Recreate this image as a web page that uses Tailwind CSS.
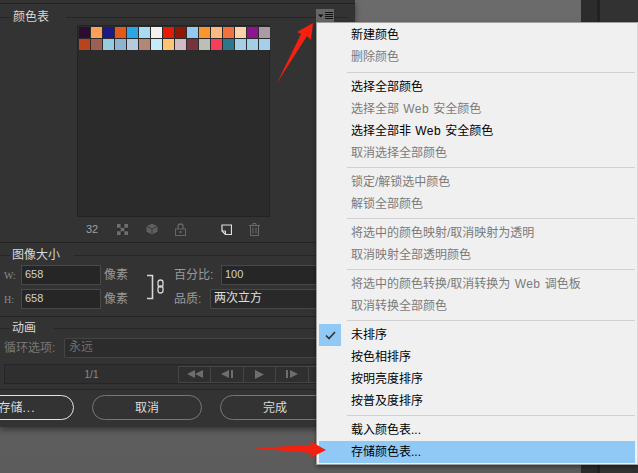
<!DOCTYPE html>
<html>
<head>
<meta charset="utf-8">
<title>颜色表</title>
<script src="https://cdn.jsdelivr.net/npm/@tailwindcss/browser@4"></script>
</head>
<body class="bg-[#636363] font-['Liberation_Sans','Noto_Sans_CJK_SC',sans-serif]">
<div class="relative w-[638px] h-[473px] overflow-hidden bg-gradient-to-b from-[#6b6b6b] to-[#5c5c5c]">

  <!-- panel behind the menu -->
  <div class="w-[355px] h-[427px] bg-[#333333] flex flex-col text-[12px] text-[#cfcfcf] whitespace-nowrap shadow-[0_3px_6px_rgba(0,0,0,0.4)]">
    <div class="h-[4px] border-b border-[#222222]"></div>

    <!-- colour table -->
    <div class="h-[17px] mt-[5px] flex items-center">
      <div class="w-[10px] h-px bg-[#262626]"></div>
      <span class="px-[3px] leading-[17px] text-[#d8d8d8]">颜色表</span>
      <div class="flex-1 ml-[14px] mr-[7px] h-px bg-[#262626]"></div>
    </div>
    <div class="ml-[77px] w-[193px] h-[192px] mt-[-1px] bg-[#2b2b2b] border border-[#232323] pt-[1px] pl-[1px]">
      <div class="grid grid-cols-[repeat(16,11px)] auto-rows-[11px] gap-px">
        <div class="bg-[#2e0c2f]"></div><div class="bg-[#fc9f5c]"></div><div class="bg-[#1c1987]"></div><div class="bg-[#e2591d]"></div><div class="bg-[#2ba6e4]"></div><div class="bg-[#a9dcf1]"></div><div class="bg-[#f5f1ec]"></div><div class="bg-[#e31c02]"></div><div class="bg-[#8e1803]"></div><div class="bg-[#95c9f0]"></div><div class="bg-[#fa9530]"></div><div class="bg-[#fdb981]"></div><div class="bg-[#f17240]"></div><div class="bg-[#fdd4a9]"></div><div class="bg-[#8f1490]"></div><div class="bg-[#a99ca5]"></div>
        <div class="bg-[#b8431d]"></div><div class="bg-[#9b5f55]"></div><div class="bg-[#98cbdf]"></div><div class="bg-[#8fb4d3]"></div><div class="bg-[#b3cbdc]"></div><div class="bg-[#b38778]"></div><div class="bg-[#c4ecfb]"></div><div class="bg-[#fec374]"></div><div class="bg-[#d3b9c3]"></div><div class="bg-[#76323d]"></div><div class="bg-[#bcbfb5]"></div><div class="bg-[#f83e5d]"></div><div class="bg-[#2e768d]"></div><div class="bg-[#a5cfe7]"></div><div class="bg-[#a3cfe6]"></div><div class="bg-[#a3d0e8]"></div>
      </div>
    </div>

    <!-- colour table toolbar -->
    <div class="ml-[86px] h-[24px] flex items-center text-[#a0a0a0]">
      <span class="w-[31px] text-[11px]">32</span>
      <svg class="w-[11px] h-[11px]" viewBox="0 0 12 12"><rect width="12" height="12" fill="#2e2e2e"/><path d="M0 0h4v4H0zM8 0h4v4H8zM4 4h4v4H4zM0 8h4v4H0zM8 8h4v4H8z" fill="#6e6e6e"/></svg>
      <svg class="ml-[18px] w-[12px] h-[12px]" viewBox="0 0 12 12"><path d="M6 .5l5.500 2.700v5.600L6 11.500.5 8.800V3.200z" fill="#5f5f5f"/><path d="M.5 3.200L6 5.900l5.500-2.700M6 5.900v5.600" stroke="#3a3a3a" fill="none"/></svg>
      <svg class="ml-[17px] w-[11px] h-[13px]" viewBox="0 0 11 13"><path d="M3 6V3.500a2.500 2.500 0 0 1 5 0V6" stroke="#666" stroke-width="1.300" fill="none"/><rect x=".5" y="6" width="10" height="6.500" fill="none" stroke="#666"/><rect x="4.500" y="8" width="2" height="2" fill="#666"/></svg>
      <svg class="ml-[35px] w-[11px] h-[11px]" viewBox="0 0 11 11"><path d="M1 1h9.500v9.500H4.500L1 7z" fill="none" stroke="#e0e0e0" stroke-width="1.200"/><path d="M1 7h3.500v3.500" fill="none" stroke="#e0e0e0"/></svg>
      <svg class="ml-[17px] w-[11px] h-[13px]" viewBox="0 0 11 13"><path d="M0 2.500h11M4 2.500V.5h3v2M1.500 2.500v10h8v-10M4 4.500v6M7 4.500v6" fill="none" stroke="#6a6a6a"/></svg>
    </div>
    <div class="h-px bg-[#242424] mt-[1px]"></div>

    <!-- image size -->
    <div class="h-[17px] mt-[4px] flex items-center">
      <div class="w-[10px] h-px bg-[#262626]"></div>
      <span class="px-[2px] leading-[17px] text-[#d8d8d8]">图像大小</span>
      <div class="flex-1 ml-[12px] h-px bg-[#262626]"></div>
    </div>
    <div class="flex mt-[-1px]">
      <div class="w-[128px]">
        <div class="flex items-center h-[24px]">
          <span class="w-[21px] pl-[4px] text-[10px] text-[#8a8a8a] font-['Liberation_Serif']">W:</span>
          <div class="w-[80px] h-[20px] bg-[#262626] border border-[#484848] pl-[3px] leading-[17px] text-[11px] text-[#d0d0d0]">658</div>
          <span class="ml-[3px] text-[#9a9a9a]">像素</span>
        </div>
        <div class="flex items-center h-[24px]">
          <span class="w-[21px] pl-[4px] text-[10px] text-[#8a8a8a] font-['Liberation_Serif']">H:</span>
          <div class="w-[80px] h-[20px] bg-[#262626] border border-[#484848] pl-[3px] leading-[17px] text-[11px] text-[#d0d0d0]">658</div>
          <span class="ml-[3px] text-[#9a9a9a]">像素</span>
        </div>
      </div>
      <svg class="ml-[18px] mt-[11px] w-[20px] h-[26px]" viewBox="0 0 20 26"><path d="M1 1.500h5.500v23H1" fill="none" stroke="#d6d6d6" stroke-width="1.600"/><rect x="12" y="6" width="5" height="7" rx="2.500" fill="none" stroke="#d6d6d6" stroke-width="1.300"/><rect x="12" y="12" width="5" height="7" rx="2.500" fill="none" stroke="#d6d6d6" stroke-width="1.300"/></svg>
      <div class="ml-[8px] flex-1">
        <div class="flex items-center h-[24px]">
          <span class="w-[47px] text-[#9a9a9a]">百分比:</span>
          <div class="flex-1 h-[20px] bg-[#262626] border border-[#484848] border-r-0 pl-[3px] leading-[17px] text-[11px] text-[#d0d0d0]">100</div>
        </div>
        <div class="flex items-center h-[24px]">
          <span class="w-[36px] text-[#9a9a9a]">品质:</span>
          <div class="flex-1 h-[20px] bg-[#292929] border border-[#484848] border-r-0 rounded-l-[2px] pl-[3px] leading-[17px] text-[#e0e0e0]">两次立方</div>
        </div>
      </div>
    </div>
    <div class="h-px bg-[#242424] mt-[5px]"></div>

    <!-- animation -->
    <div class="h-[17px] mt-[3px] flex items-center">
      <div class="w-[10px] h-px bg-[#262626]"></div>
      <span class="px-[2px] leading-[17px] text-[#d8d8d8]">动画</span>
      <div class="flex-1 ml-[16px] h-px bg-[#262626]"></div>
    </div>
    <div class="flex items-center h-[20px] mt-[1px]">
      <span class="w-[64px] pl-[4px] text-[#777777]">循环选项:</span>
      <div class="flex-1 h-[20px] bg-[#2c2c2c] border border-[#444444] border-r-0 rounded-l-[2px] pl-[4px] leading-[17px] text-[#6e6e6e]">永远</div>
    </div>
    <div class="ml-[4px] mt-[6px] h-[20px] bg-[#2f2f2f] border border-[#262626] border-r-0 flex items-center">
      <span class="w-[173px] text-center text-[10px] text-[#8a8a8a]">1/1</span>
      <div class="flex h-[17px]">
        <div class="w-[33px] border border-[#454545] flex items-center justify-center"><svg class="w-[16px] h-[8px]" viewBox="0 0 16 8"><path d="M8 0v8L0 4zM16 0v8L8 4z" fill="#6e6e6e"/></svg></div>
        <div class="w-[33px] border border-[#454545] border-l-0 flex items-center justify-center"><svg class="w-[12px] h-[8px]" viewBox="0 0 12 8"><path d="M8 0v8L0 4zM10 0h2v8h-2z" fill="#6e6e6e"/></svg></div>
        <div class="w-[32px] border border-[#454545] border-l-0 flex items-center justify-center"><svg class="w-[9px] h-[9px]" viewBox="0 0 9 9"><path d="M0 0v9l9-4.500z" fill="#6e6e6e"/></svg></div>
        <div class="w-[33px] border border-[#454545] border-l-0 flex items-center justify-center"><svg class="w-[12px] h-[8px]" viewBox="0 0 12 8"><path d="M4 0v8l8-4zM0 0h2v8H0z" fill="#6e6e6e"/></svg></div>
        <div class="w-[8px] border-y border-[#454545]"></div>
      </div>
    </div>
    <div class="h-px bg-[#262626] mt-[5px]"></div>

    <!-- buttons -->
    <div class="flex mt-[5px] ml-[-36px] gap-[18px] text-[12px] text-[#dcdcdc]">
      <div class="shrink-0 w-[110px] h-[25px] border border-[#e4e4e4] rounded-full flex items-center justify-center pr-[4px]">存储<span class="tracking-[1px]">...</span></div>
      <div class="shrink-0 w-[110px] h-[25px] border border-[#777777] rounded-full flex items-center justify-center">取消</div>
      <div class="shrink-0 w-[110px] h-[25px] border border-[#777777] rounded-full flex items-center justify-center">完成</div>
    </div>
  </div>

  <!-- right side panel -->
  <div class="absolute right-0 top-0 bottom-0 w-[57px] flex">
    <div class="w-[16px] bg-[#2c2c2c]"></div>
    <div class="w-[3px] bg-[#222222]"></div>
    <div class="flex-1 bg-[#323232]"></div>
  </div>

  <!-- panel menu button -->
  <div class="absolute left-[316px] top-[9px] w-[18px] h-[13px] bg-[#666666] flex items-center justify-center">
    <svg class="w-[15px] h-[8px]" viewBox="0 0 15 8"><path d="M0 2.500h5.500L2.750 5.500z" fill="#111"/><path d="M7 .5h8M7 2.500h8M7 4.500h8M7 6.500h8" stroke="#111"/></svg>
  </div>

  <!-- flyout menu -->
  <div class="absolute left-[316px] top-[22px] w-[322px] h-[443px] bg-[#f0f0f0] border border-[#a0a0a0] border-r-[#d8d8d8] pt-px pl-[2px] text-[12px] leading-[22px] text-[#000000] whitespace-nowrap shadow-[0_2px_4px_rgba(0,0,0,0.4)]">
    <div class="flex flex-col">
      <div class="pl-[32px] h-[22px]">新建颜色</div>
      <div class="pl-[32px] h-[22px] text-[#7a7a7a]">删除颜色</div>
      <div class="ml-[28px] mr-[2px] h-[8px] flex items-center"><div class="h-px w-full bg-[#d0d0d0]"></div></div>
      <div class="pl-[32px] h-[22px]">选择全部颜色</div>
      <div class="pl-[32px] h-[22px] text-[#7a7a7a] [word-spacing:1px]">选择全部 <span class="tracking-[0.4px]">Web</span> 安全颜色</div>
      <div class="pl-[32px] h-[22px] [word-spacing:1px]">选择全部非 <span class="tracking-[0.4px]">Web</span> 安全颜色</div>
      <div class="pl-[32px] h-[22px] text-[#7a7a7a]">取消选择全部颜色</div>
      <div class="ml-[28px] mr-[2px] h-[7px] flex items-center"><div class="h-px w-full bg-[#d0d0d0]"></div></div>
      <div class="pl-[32px] h-[22px] text-[#7a7a7a]">锁定/解锁选中颜色</div>
      <div class="pl-[32px] h-[22px] text-[#7a7a7a]">解锁全部颜色</div>
      <div class="ml-[28px] mr-[2px] h-[7px] flex items-center"><div class="h-px w-full bg-[#d0d0d0]"></div></div>
      <div class="pl-[32px] h-[22px] text-[#7a7a7a]">将选中的颜色映射/取消映射为透明</div>
      <div class="pl-[32px] h-[22px] text-[#7a7a7a]">取消映射全部透明颜色</div>
      <div class="ml-[28px] mr-[2px] h-[7px] flex items-center"><div class="h-px w-full bg-[#d0d0d0]"></div></div>
      <div class="pl-[32px] h-[22px] text-[#7a7a7a] [word-spacing:1px]">将选中的颜色转换/取消转换为 <span class="tracking-[0.4px]">Web</span> 调色板</div>
      <div class="pl-[32px] h-[22px] text-[#7a7a7a]">取消转换全部颜色</div>
      <div class="ml-[28px] mr-[2px] h-[7px] flex items-center"><div class="h-px w-full bg-[#d0d0d0]"></div></div>
      <div class="relative pl-[32px] h-[22px]">
        未排序
        <div class="absolute left-0 top-0 w-[22px] h-[22px] bg-[#90c8f6] flex items-center justify-center">
          <svg class="w-[11px] h-[9px]" viewBox="0 0 11 9"><path d="M1 4.500L4 7.500 10 1" fill="none" stroke="#333" stroke-width="1.700"/></svg>
        </div>
      </div>
      <div class="pl-[32px] h-[22px]">按色相排序</div>
      <div class="pl-[32px] h-[22px]">按明亮度排序</div>
      <div class="pl-[32px] h-[22px]">按普及度排序</div>
      <div class="ml-[28px] mr-[2px] h-[7px] flex items-center"><div class="h-px w-full bg-[#d0d0d0]"></div></div>
      <div class="pl-[32px] h-[22px]">载入颜色表...</div>
      <div class="pl-[32px] mr-[2px] h-[22px] bg-[#90c8f6]">存储颜色表...</div>
    </div>
  </div>

  <!-- annotation arrows -->
  <svg class="absolute left-0 top-0 w-[638px] h-[473px] pointer-events-none" viewBox="0 0 638 473">
    <path d="M277 83L301 34 297 32 313 23 311 40 307 36z" fill="#f5200f"/>
    <path d="M252 448L311 445 310 441 326 450 310 458 311 453z" fill="#f5200f"/>
  </svg>
</div>
</body>
</html>
